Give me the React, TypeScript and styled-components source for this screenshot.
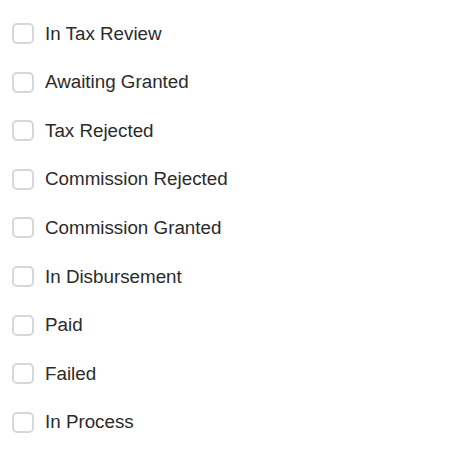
import styled, { createGlobalStyle } from 'styled-components'

const GlobalStyle = createGlobalStyle`
    html, body {
        margin: 0;
        padding: 0;
        background: #ffffff;
        font-family: "Liberation Sans", Arial, sans-serif;
    }
`;

const List = styled.div`
    display: flex;
    flex-direction: column;
    padding: 9.5px 12px 0;
`;

const Row = styled.label`
    display: flex;
    align-items: center;
    gap: 11px;
    height: 48.55px;
    cursor: pointer;
`;

const Box = styled.input.attrs({ type: 'checkbox' })`
    appearance: none;
    margin: 0;
    width: 22px;
    height: 21px;
    border: 2px solid #d3d7de;
    border-radius: 5px;
    background: #fff;
    box-sizing: border-box;
    flex-shrink: 0;
`;

const Label = styled.span`
    font-size: 18.8px;
    color: #2b2b2b;
`;

const statuses = [
    'In Tax Review',
    'Awaiting Granted',
    'Tax Rejected',
    'Commission Rejected',
    'Commission Granted',
    'In Disbursement',
    'Paid',
    'Failed',
    'In Process',
];

function App() {
    return (
        <>
            <GlobalStyle />
            <List>
                {statuses.map((s) => (
                    <Row key={s}>
                        <Box />
                        <Label>{s}</Label>
                    </Row>
                ))}
            </List>
        </>
    )
}

export default App
